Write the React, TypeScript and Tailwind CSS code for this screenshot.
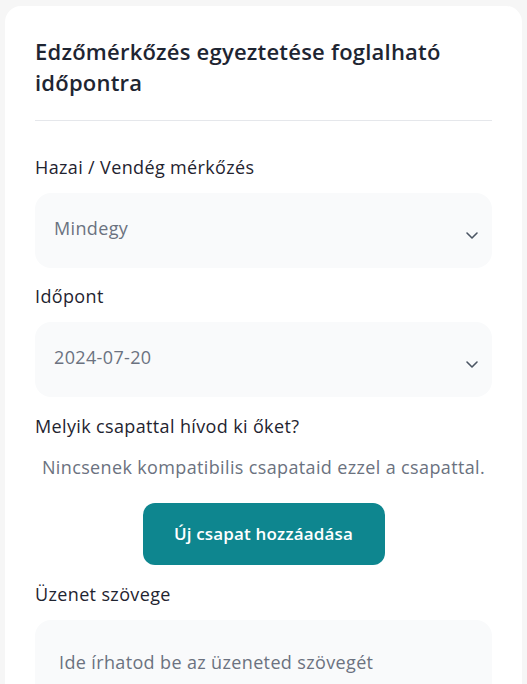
import React from "react";

function Chevron() {
  return (
    <svg width="14" height="10" viewBox="0 0 14 10" fill="none" className="shrink-0">
      <path d="M2 3l5 5 5-5" stroke="#4b5563" strokeWidth="1.6" strokeLinecap="round" strokeLinejoin="round" />
    </svg>
  );
}

function SelectBox({ value }: { value: string }) {
  return (
    <div className="h-[75px] rounded-2xl bg-[#f9fafb] flex items-center justify-between pl-[19px] pr-[13px]">
      <span className="text-[18px] tracking-[0.02em] text-[#6b7280] -mt-[4px]">{value}</span>
      <span className="mt-[8px]"><Chevron /></span>
    </div>
  );
}

export default function App() {
  return (
    <div className="min-h-screen bg-[#f6f6f6] pt-[6px] px-[5px]" style={{ fontFamily: "'Open Sans', sans-serif" }}>
      <div className="bg-white rounded-2xl px-[30px] pt-[30px] pb-[20px] h-[700px]">
        <h1 className="text-[22px] leading-[31px] tracking-[0.01em] font-semibold text-[#1e2532]">
          Edzőmérkőzés egyeztetése foglalható időpontra
        </h1>
        <div className="mt-[22px] border-t border-[#e5e7eb]" />

        <div className="mt-[34px] text-[18px] tracking-[0.02em] leading-[24px] text-[#1f2430]">Hazai / Vendég mérkőzés</div>
        <div className="mt-[14px]"><SelectBox value="Mindegy" /></div>

        <div className="mt-[16px] text-[18px] tracking-[0.02em] leading-[24px] text-[#1f2430]">Időpont</div>
        <div className="mt-[14px]"><SelectBox value="2024-07-20" /></div>

        <div className="mt-[17px] text-[18px] tracking-[0.02em] leading-[24px] text-[#1f2430]">Melyik csapattal hívod ki őket?</div>
        <div className="mt-[17px] text-[18px] tracking-[0.02em] leading-[24px] text-[#6b7280] text-center">
          Nincsenek kompatibilis csapataid ezzel a csapattal.
        </div>
        <div className="mt-[24px] flex justify-center">
          <button className="w-[242px] h-[62px] rounded-xl bg-[#0e868f] text-white text-[17px] tracking-[0.01em] font-semibold">
            Új csapat hozzáadása
          </button>
        </div>

        <div className="mt-[17px] text-[18px] tracking-[0.02em] leading-[24px] text-[#1f2430]">Üzenet szövege</div>
        <div className="mt-[14px] h-[120px] rounded-2xl bg-[#f9fafb] pl-[24px] pt-[29px]">
          <span className="text-[18px] tracking-[0.02em] text-[#6b7280]">Ide írhatod be az üzeneted szövegét</span>
        </div>
      </div>
    </div>
  );
}
